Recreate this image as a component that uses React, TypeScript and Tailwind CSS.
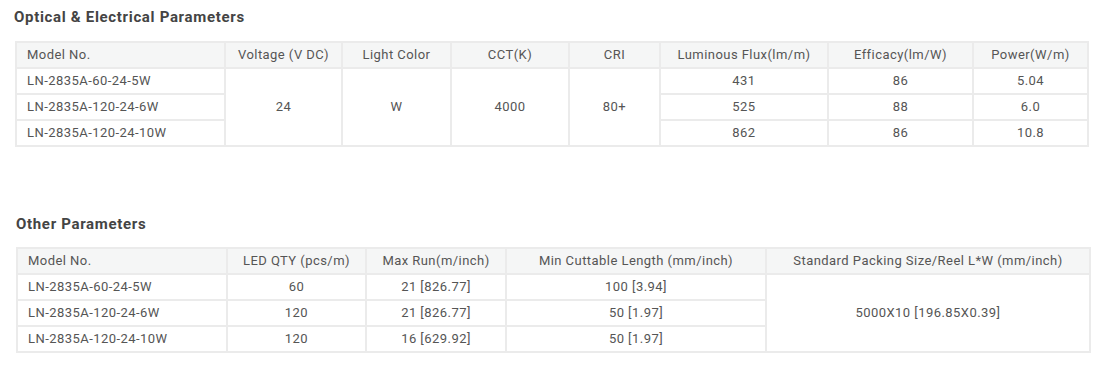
import React from "react";

const cell = "border-2 border-[#ebebeb] h-[26px] px-[10px] text-center";
const modelCell = "border-2 border-[#ebebeb] h-[26px] px-[10px] text-left";

const optical = [
  { model: "LN-2835A-60-24-5W", flux: "431", efficacy: "86", power: "5.04" },
  { model: "LN-2835A-120-24-6W", flux: "525", efficacy: "88", power: "6.0" },
  { model: "LN-2835A-120-24-10W", flux: "862", efficacy: "86", power: "10.8" },
];

const other = [
  { model: "LN-2835A-60-24-5W", qty: "60", run: "21 [826.77]", cut: "100 [3.94]" },
  { model: "LN-2835A-120-24-6W", qty: "120", run: "21 [826.77]", cut: "50 [1.97]" },
  { model: "LN-2835A-120-24-10W", qty: "120", run: "16 [629.92]", cut: "50 [1.97]" },
];

const OpticalTable: React.FC = () => (
  <table className="border-collapse w-[1072px] table-fixed">
    <colgroup>
      <col className="w-[209px]" />
      <col className="w-[117px]" />
      <col className="w-[109px]" />
      <col className="w-[118px]" />
      <col className="w-[91px]" />
      <col className="w-[168px]" />
      <col className="w-[145px]" />
      <col className="w-[115px]" />
    </colgroup>
    <thead>
      <tr className="bg-[#f5f6f6]">
        <th className={`${modelCell} font-normal`}>Model No.</th>
        <th className={`${cell} font-normal`}>Voltage (V DC)</th>
        <th className={`${cell} font-normal`}>Light Color</th>
        <th className={`${cell} font-normal`}>CCT(K)</th>
        <th className={`${cell} font-normal`}>CRI</th>
        <th className={`${cell} font-normal`}>Luminous Flux(lm/m)</th>
        <th className={`${cell} font-normal`}>Efficacy(lm/W)</th>
        <th className={`${cell} font-normal`}>Power(W/m)</th>
      </tr>
    </thead>
    <tbody>
      {optical.map((row, i) => (
        <tr key={row.model}>
          <td className={modelCell}>{row.model}</td>
          {i === 0 && (
            <>
              <td rowSpan={3} className={cell}>24</td>
              <td rowSpan={3} className={cell}>W</td>
              <td rowSpan={3} className={cell}>4000</td>
              <td rowSpan={3} className={cell}>80+</td>
            </>
          )}
          <td className={cell}>{row.flux}</td>
          <td className={cell}>{row.efficacy}</td>
          <td className={cell}>{row.power}</td>
        </tr>
      ))}
    </tbody>
  </table>
);

const OtherTable: React.FC = () => (
  <table className="border-collapse w-[1073px] table-fixed">
    <colgroup>
      <col className="w-[210px]" />
      <col className="w-[139px]" />
      <col className="w-[140px]" />
      <col className="w-[260px]" />
      <col className="w-[324px]" />
    </colgroup>
    <thead>
      <tr className="bg-[#f5f6f6]">
        <th className={`${modelCell} font-normal h-[25px]`}>Model No.</th>
        <th className={`${cell} font-normal h-[25px]`}>LED QTY (pcs/m)</th>
        <th className={`${cell} font-normal h-[25px]`}>Max Run(m/inch)</th>
        <th className={`${cell} font-normal h-[25px]`}>Min Cuttable Length (mm/inch)</th>
        <th className={`${cell} font-normal h-[25px]`}>Standard Packing Size/Reel L*W (mm/inch)</th>
      </tr>
    </thead>
    <tbody>
      {other.map((row, i) => (
        <tr key={row.model}>
          <td className={modelCell}>{row.model}</td>
          <td className={cell}>{row.qty}</td>
          <td className={cell}>{row.run}</td>
          <td className={cell}>{row.cut}</td>
          {i === 0 && (
            <td rowSpan={3} className={cell}>5000X10 [196.85X0.39]</td>
          )}
        </tr>
      ))}
    </tbody>
  </table>
);

export default function App() {
  return (
    <div className="w-[1104px] h-[365px] bg-white pl-[15px] text-[13px] tracking-[0.45px] text-[#555] font-['Roboto',sans-serif]">
      <h2 className="pt-[7px] leading-[20px] text-[15px] tracking-[0.68px] font-bold text-[#444] mb-[14px] -ml-px">
        Optical &amp; Electrical Parameters
      </h2>
      <OpticalTable />
      <div className="ml-px">
        <h2 className="mt-[67px] leading-[20px] text-[15px] tracking-[0.68px] font-bold text-[#444] mb-[13px]">
          Other Parameters
        </h2>
        <OtherTable />
      </div>
    </div>
  );
}
